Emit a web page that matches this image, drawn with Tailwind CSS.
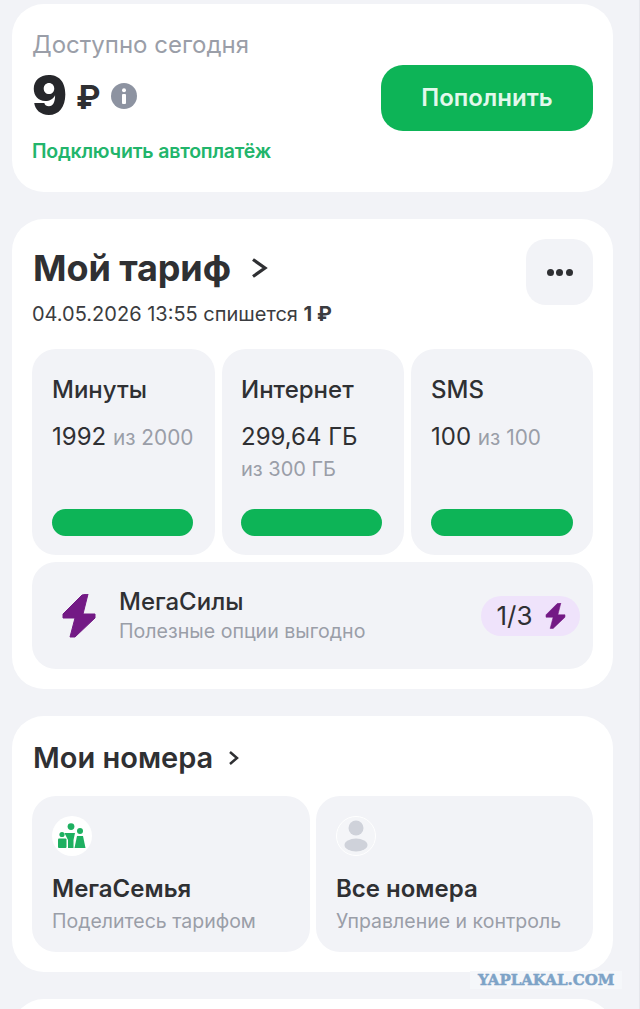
<!DOCTYPE html>
<html lang="ru">
<head>
    <meta charset="UTF-8">
    <meta name="viewport" content="width=device-width, initial-scale=1.0">
    <title>Мой тариф</title>
    <script src="https://cdn.jsdelivr.net/npm/@tailwindcss/browser@4"></script>
</head>
<body class="bg-[#f2f3f7] font-['Inter','Noto_Sans',sans-serif] text-[#2f3033]">
<div class="relative h-[1009px] w-[640px] overflow-hidden pl-3 pr-[27px] pt-1">

    <!-- Balance -->
    <section class="relative h-[188px] rounded-[32px] bg-white pl-5 pr-5">
        <p class="pt-[27px] text-[24px] leading-7 text-[#9a9ea8]">Доступно сегодня</p>
        <div class="mt-[17px] flex h-10 items-center">
            <span class="text-[52px] font-black leading-10 text-[#26272b]">9</span>
            <span class="ml-[9px] mt-[2px] text-[33px] font-bold leading-10 text-[#2f3033]">₽</span>
            <span class="ml-[10px] flex h-[26px] w-[26px] items-center justify-center rounded-full bg-[#8d93a1]">
                <svg width="6" height="16" viewBox="0 0 6 16"><circle cx="3" cy="2.2" r="2" fill="#fff"/><rect x="1" y="6" width="4" height="10" rx="1" fill="#fff"/></svg>
            </span>
        </div>
        <p class="mt-[23px] text-[19.5px] font-semibold leading-6 tracking-[-0.2px] text-[#22b56b]">Подключить автоплатёж</p>
        <button class="absolute right-5 top-[61px] h-[66px] w-[212px] rounded-[22px] bg-[#0db457] text-[24px] font-semibold text-[#e3f8ec]">Пополнить</button>
    </section>

    <!-- Tariff -->
    <section class="mt-[27px] h-[470px] rounded-[32px] bg-white px-5 pt-5">
        <div class="flex h-[66px] items-start justify-between">
            <div class="flex h-[58px] items-center pl-px">
                <h2 class="text-[36px] font-bold tracking-[-0.1px] text-[#2f3033]">Мой тариф</h2>
                <svg class="ml-[20px]" width="17" height="22" viewBox="0 0 17 22" fill="none"><path d="M2 2.5l12 8.5-12 8.5" stroke="#2f3033" stroke-width="3.2"/></svg>
            </div>
            <div class="flex h-[66px] w-[67px] items-center justify-center gap-[2.5px] rounded-[20px] bg-[#f2f3f7]">
                <i class="h-[7px] w-[7px] rounded-full bg-[#2f3033]"></i>
                <i class="h-[7px] w-[7px] rounded-full bg-[#2f3033]"></i>
                <i class="h-[7px] w-[7px] rounded-full bg-[#2f3033]"></i>
            </div>
        </div>
        <p class="-mt-[3px] text-[20px] leading-6 text-[#3b3c40]">04.05.2026 13:55 спишется <b class="font-bold">1 ₽</b></p>

        <div class="mt-[23px] grid grid-cols-[183px_182px_182px] gap-[7px]">
            <div class="flex h-[206px] flex-col rounded-[24px] bg-[#f2f3f7] pb-[19px] pl-5 pr-[22px] pt-[27px]">
                <h3 class="text-[24px] font-medium leading-7">Минуты</h3>
                <p class="mt-[21px] whitespace-nowrap text-[24px] leading-6">1992 <span class="text-[20.8px] text-[#9a9ea8]">из 2000</span></p>
                <div class="mt-auto h-[27px] rounded-full bg-[#0db457]"></div>
            </div>
            <div class="flex h-[206px] flex-col rounded-[24px] bg-[#f2f3f7] pb-[19px] pl-[19px] pr-[22px] pt-[27px]">
                <h3 class="text-[24px] font-medium leading-7">Интернет</h3>
                <p class="mt-[21px] text-[24px] leading-6">299,64 ГБ</p>
                <p class="mt-[8px] text-[20px] leading-6 text-[#9a9ea8]">из 300 ГБ</p>
                <div class="mt-auto h-[27px] rounded-full bg-[#0db457]"></div>
            </div>
            <div class="flex h-[206px] flex-col rounded-[24px] bg-[#f2f3f7] px-5 pb-[19px] pt-[27px]">
                <h3 class="text-[24px] font-medium leading-7">SMS</h3>
                <p class="mt-[21px] whitespace-nowrap text-[24px] leading-6">100 <span class="text-[20.8px] text-[#9a9ea8]">из 100</span></p>
                <div class="mt-auto h-[27px] rounded-full bg-[#0db457]"></div>
            </div>
        </div>

        <div class="mt-[7px] flex h-[107px] items-center rounded-[24px] bg-[#f2f3f7] pl-[30px] pr-[13px]">
            <svg width="34" height="44" viewBox="0 0 34 44"><path d="M20 1L26 0L21 20H33V24L13 43H8L13 24H1V20Z" fill="#731a85" stroke="#731a85" stroke-width="1" stroke-linejoin="round"/></svg>
            <div class="ml-[23px]">
                <p class="text-[24px] font-medium leading-7">МегаСилы</p>
                <p class="mt-[3px] text-[19.6px] leading-6 text-[#9a9ea8]">Полезные опции выгодно</p>
            </div>
            <div class="ml-auto flex h-10 w-[99px] items-center justify-center gap-[12px] rounded-full bg-[#efe3fb] pl-px">
                <span class="text-[26px] leading-6">1/3</span>
                <svg width="21" height="26" viewBox="0 0 34 44"><path d="M20 1L26 0L21 20H33V24L13 43H8L13 24H1V20Z" fill="#731a85" stroke="#731a85" stroke-width="1" stroke-linejoin="round"/></svg>
            </div>
        </div>
    </section>

    <!-- Numbers -->
    <section class="mt-[27px] h-[256px] rounded-[32px] bg-white px-5 pt-[22px]">
        <div class="flex h-[40px] items-center pl-px">
            <h2 class="text-[29px] font-semibold text-[#2f3033]">Мои номера</h2>
            <svg class="ml-[15px]" width="12" height="16" viewBox="0 0 12 16" fill="none"><path d="M2 2l7 6-7 6" stroke="#2f3033" stroke-width="2.5"/></svg>
        </div>
        <div class="mt-[18px] grid grid-cols-[278px_277px] gap-[6px]">
            <div class="h-[156px] rounded-[24px] bg-[#f2f3f7] px-5 pt-5">
                <div class="flex h-10 w-10 items-center justify-center rounded-full bg-white">
                    <svg width="30" height="26" viewBox="0 0 30 26" fill="#1eb061">
                        <circle cx="14" cy="3.6" r="3.4"/><circle cx="5" cy="11.5" r="2.6"/><circle cx="23" cy="8" r="3"/>
                        <path d="M7.5 10H18L16.5 17V25H11V17Z"/>
                        <rect x="1" y="15.5" width="8.5" height="9.5" rx="1"/>
                        <path d="M20 13h6l2.5 12h-11z"/>
                    </svg>
                </div>
                <p class="mt-[19px] text-[24px] font-semibold leading-7">МегаСемья</p>
                <p class="mt-[6px] text-[19.5px] leading-6 text-[#9a9ea8]">Поделитесь тарифом</p>
            </div>
            <div class="h-[156px] rounded-[24px] bg-[#f2f3f7] px-5 pt-5">
                <div class="flex h-10 w-10 items-center justify-center rounded-full border border-white bg-[#f4f5f8]">
                    <svg width="24" height="32" viewBox="0 0 24 32" fill="#cfd2da"><circle cx="12" cy="8" r="7.5"/><ellipse cx="12" cy="25" rx="11.5" ry="6.5"/></svg>
                </div>
                <p class="mt-[19px] text-[24px] font-semibold leading-7">Все номера</p>
                <p class="mt-[6px] text-[19.5px] leading-6 text-[#9a9ea8]">Управление и контроль</p>
            </div>
        </div>
    </section>

    <section class="mt-[27px] h-20 rounded-[32px] bg-white"></section>

    <!-- Watermark -->
    <div class="absolute left-[470px] top-[971px] bg-[#f5f7fa] px-2 font-['DejaVu_Serif',serif] text-[15px] font-bold leading-[18px] text-[#7da3c7] [-webkit-text-stroke:0.5px_#7da3c7]">YAPLAKAL.COM</div>
    <div class="absolute right-0 top-0 h-full w-px bg-[#e6e7ec]"></div>
</div>
</body>
</html>
